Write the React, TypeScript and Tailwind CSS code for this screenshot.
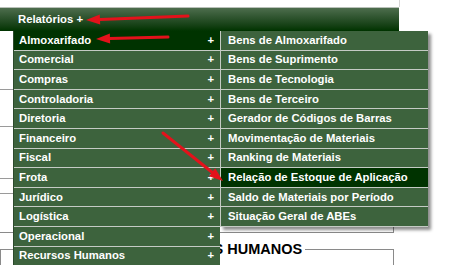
import React from 'react';

const mainItems = [
  'Almoxarifado',
  'Comercial',
  'Compras',
  'Controladoria',
  'Diretoria',
  'Financeiro',
  'Fiscal',
  'Frota',
  'Jurídico',
  'Logística',
  'Operacional',
  'Recursos Humanos'
];

const subItems = [
  'Bens de Almoxarifado',
  'Bens de Suprimento',
  'Bens de Tecnologia',
  'Bens de Terceiro',
  'Gerador de Códigos de Barras',
  'Movimentação de Materiais',
  'Ranking de Materiais',
  'Relação de Estoque de Aplicação',
  'Saldo de Materiais por Período',
  'Situação Geral de ABEs'
];

interface ArrowProps {
  x1: number;
  y1: number;
  x2: number;
  y2: number;
}

// seta vermelha de anotação (x2,y2 = ponta)
const Arrow: React.FC<ArrowProps> = ({ x1, y1, x2, y2 }) => {
  const dx = x2 - x1;
  const dy = y2 - y1;
  const len = Math.hypot(dx, dy);
  const ux = dx / len;
  const uy = dy / len;
  const headLen = 14;
  const half = 5;
  const bx = x2 - ux * headLen;
  const by = y2 - uy * headLen;
  const points = [
    `${x2},${y2}`,
    `${bx - uy * half},${by + ux * half}`,
    `${bx + uy * half},${by - ux * half}`
  ].join(' ');
  return (
    <g>
      <line x1={x1} y1={y1} x2={bx} y2={by} stroke="#e3121b" strokeWidth={3} strokeLinecap="round" />
      <polygon points={points} fill="#e3121b" />
    </g>
  );
};

const App: React.FC = () => {
  return (
    <div className="relative w-[450px] h-[265px] overflow-hidden bg-white font-['Liberation_Sans',Arial,sans-serif]">
      {/* faixa superior */}
      <div className="h-[7px] w-[400px] border-r border-[#d6d6d6]" />

      {/* barra de navegação */}
      <nav className="h-[24px] w-[399px] border-t border-[#b9c1b9] bg-gradient-to-b from-[#4d6d4d] via-[#284f28] to-[#003300] flex items-center pl-[18px]">
        <span className="text-[11.3px] font-bold text-white">Relatórios +</span>
      </nav>

      {/* conteúdo de fundo */}
      <main>
        <div className="w-[394px] border-r border-b border-[#8a8a8a]">
          <div className="h-[59px] border-b border-[#9a9a9a]" />
          <div className="h-[37px] border-b border-[#9a9a9a]" />
          <div className="h-[52px] border-b border-[#9a9a9a]" />
          <div className="h-[15px] border-b border-[#9a9a9a]" />
          <div className="h-[38px]" />
        </div>
        <fieldset className="mt-[8px] w-[394px] h-[60px] border border-[#8a8a8a] p-0">
          <legend className="ml-[137px] px-[3px] text-[14.5px] font-bold text-black leading-[16px]">
            RECURSOS HUMANOS
          </legend>
        </fieldset>
      </main>

      {/* menu principal */}
      <ul className="absolute left-[13px] top-[31px] w-[207px] border-l border-[#2c4a2c]">
        {mainItems.map((item, i) => (
          <li
            key={item}
            className={`h-[19.6px] flex items-center justify-between pl-[5px] pr-[6px] border-b border-[#c5cbc5] text-[11.3px] font-bold text-white ${
              i === 0 ? 'bg-[#003300]' : 'bg-[#3d633d]'
            }`}
          >
            <span>{item}</span>
            <span>+</span>
          </li>
        ))}
      </ul>

      {/* submenu Almoxarifado */}
      <ul className="absolute left-[220px] top-[31px] w-[208px] border-l border-[#c5cbc5] shadow-[3px_3px_3px_rgba(0,0,0,0.45)]">
        {subItems.map((item, i) => (
          <li
            key={item}
            className={`h-[19.6px] flex items-center pl-[7px] border-b border-[#c5cbc5] text-[11.3px] font-bold text-white ${
              i === 7 ? 'bg-[#003300]' : 'bg-[#3d633d]'
            }`}
          >
            {item}
          </li>
        ))}
      </ul>

      {/* setas de anotação */}
      <svg className="absolute inset-0 pointer-events-none" width={450} height={265}>
        <Arrow x1={188} y1={16} x2={86} y2={20} />
        <Arrow x1={168} y1={37} x2={96} y2={39} />
        <Arrow x1={163} y1={133} x2={223} y2={181} />
      </svg>
    </div>
  );
};

export default App;
